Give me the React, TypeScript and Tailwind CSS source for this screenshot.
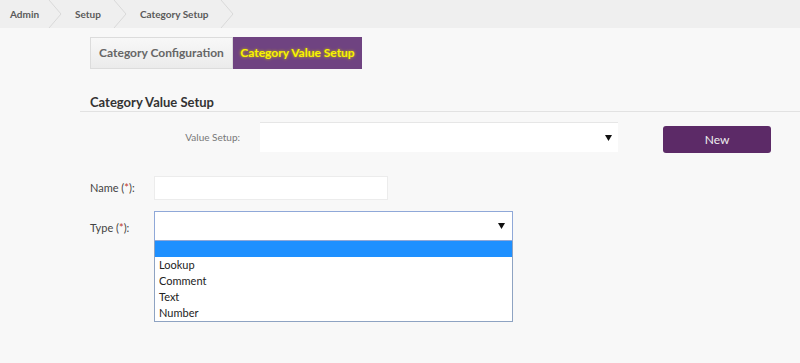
import { useState } from "react";

const crumbs = ["Admin", "Setup", "Category Setup"];
const typeOptions = ["", "Lookup", "Comment", "Text", "Number"];

function Chevron() {
  return (
    <svg width="14" height="28" viewBox="0 0 14 28" className="shrink-0">
      <path d="M1 0 L13 14 L1 28" fill="none" stroke="#d9d9d9" strokeWidth="1" />
    </svg>
  );
}

function Arrow() {
  return (
    <svg width="7" height="6" viewBox="0 0 7 6">
      <path d="M0 0 H7 L3.5 6 Z" fill="#111" />
    </svg>
  );
}

export default function App() {
  const [tab] = useState(1);

  return (
    <div
      className="w-[800px] h-[363px] bg-[#f8f8f8] overflow-hidden"
      style={{ fontFamily: "Lato, 'Open Sans', sans-serif" }}
    >
      {/* breadcrumb */}
      <nav className="h-[28px] bg-[#efefef] flex items-center text-[10px] font-bold text-[#5a5a5a]">
        {crumbs.map((c, i) => (
          <div key={c} className="flex items-center h-full">
            <span className={i === 0 ? "pl-[10px] pr-[9px]" : "pl-[13px] pr-[12px]"}>{c}</span>
            <Chevron />
          </div>
        ))}
      </nav>

      {/* tabs */}
      <div className="flex pl-[90px] pt-[9px]">
        <div
          className={`h-[32px] w-[143px] flex items-center justify-center text-[12px] font-bold border border-[#dcdcdc] ${
            tab === 0 ? "bg-[#6b3e7c] text-[#ffff33]" : "bg-gradient-to-b from-[#f8f8f8] to-[#ebebeb] text-[#666]"
          }`}
        >
          Category Configuration
        </div>
        <div className="h-[32px] w-[129px] flex items-center justify-center text-[12px] font-bold bg-[#6f4381] text-[#f8f400] [text-shadow:0_0_3px_#d6c800]">
          Category Value Setup
        </div>
      </div>

      {/* section heading */}
      <div className="ml-[80px] mt-[25px] border-b border-[#e2e2e2] pl-[10px] pb-[1px]">
        <h2 className="text-[13px] font-bold text-[#333] leading-[16px]">Category Value Setup</h2>
      </div>

      {/* value setup row */}
      <div className="flex items-center mt-[9px]">
        <label className="w-[240px] text-right text-[10px] text-[#777]">Value Setup:</label>
        <div className="ml-[20px] w-[358px] h-[30px] bg-white border-t border-[#e6e6e6] flex items-center justify-end pr-[6px]">
          <Arrow />
        </div>
        <button className="ml-[45px] mt-[5px] w-[108px] h-[27px] rounded-[3px] bg-[#5c2a67] text-[#eee] text-[12px]">
          New
        </button>
      </div>

      {/* name row */}
      <div className="flex items-center mt-[23px] pl-[90px]">
        <label className="w-[64px] text-[11px] text-[#444]">
          Name (<span className="text-[#c0392b]">*</span>):
        </label>
        <div className="w-[234px] h-[24px] bg-white border border-[#ececec]" />
      </div>

      {/* type row */}
      <div className="flex mt-[11px] pl-[90px]">
        <label className="w-[64px] text-[11px] text-[#444] pt-[9px]">
          Type (<span className="text-[#c0392b]">*</span>):
        </label>
        <div className="w-[359px] relative">
          <div className="h-[30px] bg-white border border-[#8fa8d8] flex items-center justify-end pr-[7px]">
            <Arrow />
          </div>
          <ul className="bg-white border border-[#8ea3c2] border-t-0 text-[11px] text-[#222] leading-[16px]">
            {typeOptions.map((o, i) => (
              <li key={i} className={`pl-[4px] h-[16px] ${i === 0 ? "bg-[#1e90ff] h-[15px]" : ""}`}>
                {o}
              </li>
            ))}
          </ul>
        </div>
      </div>
    </div>
  );
}
